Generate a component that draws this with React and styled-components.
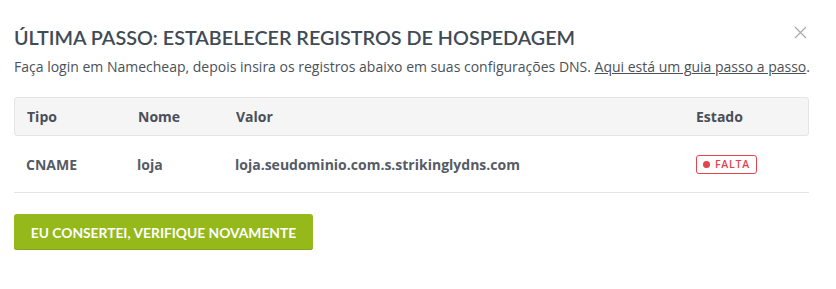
import React from "react";
import styled, { createGlobalStyle } from "styled-components";

const Global = createGlobalStyle`
  html, body { margin: 0; padding: 0; background: #fff; }
  body { font-family: "Open Sans", sans-serif; }
`;

const Dialog = styled.div`
  position: relative;
  width: 836px;
  height: 289px;
  box-sizing: border-box;
  padding: 24px 27px 0 14px;
  background: #fff;
`;

const Close = styled.button`
  position: absolute;
  top: 26px;
  right: 29px;
  width: 13px;
  height: 13px;
  padding: 0;
  border: 0;
  background: none;
  cursor: pointer;
  display: flex;
`;

const Title = styled.h2`
  margin: 0;
  font-family: Lato, sans-serif;
  font-weight: 600;
  font-size: 19.75px;
  line-height: 28px;
  color: #3f4b55;
`;

const Sub = styled.p`
  margin: 5px 0 0;
  font-size: 14px;
  line-height: 20px;
  white-space: nowrap;
  color: #4b5159;
  a { color: #4b5159; text-decoration: underline; }
`;

const Table = styled.div`
  margin-top: 20px;
`;

const Row = styled.div`
  display: grid;
  box-sizing: border-box;
  grid-template-columns: 111px 98px 460px 1fr;
  align-items: center;
  padding: 0 12px;
  font-size: 14px;
  font-weight: 700;
  color: ${(p) => (p.$head ? "#4a4f58" : "#555b66")};
  height: ${(p) => (p.$head ? "39px" : "57px")};
  background: ${(p) => (p.$head ? "#f5f5f5" : "#fff")};
  border: ${(p) => (p.$head ? "1px solid #e4e4e4" : "none")};
  border-bottom: 1px solid #e4e4e4;
  border-radius: ${(p) => (p.$head ? "3px" : "0")};
`;

const Badge = styled.span`
  display: inline-flex;
  align-items: center;
  box-sizing: border-box;
  gap: 5px;
  width: 61px;
  height: 19px;
  margin-left: 1px;
  padding: 0 6px;
  border: 1px solid #e5434f;
  border-radius: 3px;
  color: #e5434f;
  font-size: 10.5px;
  font-weight: 600;
  letter-spacing: 0.8px;
  &::before {
    content: "";
    width: 7px;
    height: 7px;
    border-radius: 50%;
    background: #e5434f;
  }
`;

const Button = styled.button`
  display: block;
  margin-top: 21px;
  width: 299px;
  height: 36px;
  border: 0;
  border-radius: 3px;
  background: #95b81b;
  box-shadow: inset 0 -1px 0 #86a717;
  color: #fff;
  font-family: Lato, sans-serif;
  font-weight: 700;
  font-size: 13.8px;
  cursor: pointer;
`;

export default function App() {
  return (
    <>
      <Global />
      <Dialog>
        <Close aria-label="Fechar">
          <svg width="13" height="13" viewBox="0 0 13 13">
            <path d="M1 1 L12 12 M12 1 L1 12" stroke="#a7a7a7" strokeWidth="1.1" />
          </svg>
        </Close>
        <Title>ÚLTIMA PASSO: ESTABELECER REGISTROS DE HOSPEDAGEM</Title>
        <Sub>
          Faça login em Namecheap, depois insira os registros abaixo em suas configurações DNS.{" "}
          <a href="#">Aqui está um guia passo a passo</a>.
        </Sub>
        <Table>
          <Row $head>
            <span>Tipo</span>
            <span>Nome</span>
            <span>Valor</span>
            <span>Estado</span>
          </Row>
          <Row>
            <span>CNAME</span>
            <span>loja</span>
            <span>loja.seudominio.com.s.strikinglydns.com</span>
            <Badge>FALTA</Badge>
          </Row>
        </Table>
        <Button>EU CONSERTEI, VERIFIQUE NOVAMENTE</Button>
      </Dialog>
    </>
  );
}
